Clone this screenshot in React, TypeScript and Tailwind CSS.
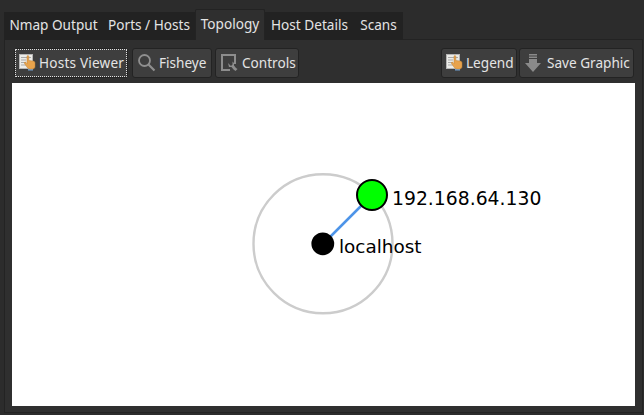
import type { ReactNode } from "react";

function HandIcon() {
  return (
    <svg width="18" height="18" viewBox="0 0 18 18" className="shrink-0">
      <rect x="0.500" y="0.500" width="13" height="14" fill="#ecece8" stroke="#b5b5b5" />
      <path d="M2 3.500h10M2 6h5M2 8.500h5M2 11h5" stroke="#a9a9a9" strokeWidth="1" />
      <path d="M9 14h5v2.500H9z" fill="#6f9fd0" />
      <path d="M8 2.500c0-1.200 1.800-1.200 1.800 0v4l4.400.6c1.300.2 1.800.9 1.800 2.100v3.300c0 1.600-1 2.500-2.500 2.500h-2.800c-1 0-1.700-.4-2.200-1.200L5.500 9.500c-.6-1 .6-1.900 1.400-1.100l1.100 1.100z" fill="#e8a34c" stroke="#bd8238" strokeWidth="0.500" />
    </svg>
  );
}

function SearchIcon() {
  return (
    <svg width="18" height="18" viewBox="0 0 18 18" className="shrink-0" fill="none" stroke="#8f8f8f">
      <circle cx="6.500" cy="6.500" r="5.500" strokeWidth="1.800" />
      <path d="M10.500 10.500l6 6" strokeWidth="2.200" />
    </svg>
  );
}

function WrenchIcon() {
  return (
    <svg width="17" height="18" viewBox="0 0 17 18" className="shrink-0">
      <path d="M14 10V1H1v15h8" fill="none" stroke="#8d8d8d" strokeWidth="2" />
      <path d="M7 9l3 3 1.500-1.500V7.500L13 9v2.500l2 2.500 1.500 1-2 2-2-1.500-2-2.500H8z" fill="#8d8d8d" />
    </svg>
  );
}

function SaveIcon() {
  return (
    <svg width="16" height="18" viewBox="0 0 16 18" className="shrink-0">
      <path d="M4 0h8v1.500H4zM4 2.500h8V4H4zM4 5h8v4h4l-8 9-8-9h4z" fill="#8a8a8a" />
    </svg>
  );
}

function ToolButton({ icon, label, focused, className }: { icon: ReactNode; label: string; focused?: boolean; className: string }) {
  return (
    <div className={`h-[30px] rounded-[3px] border border-[#232323] bg-[#3e3e3e] flex items-center relative whitespace-nowrap ${className}`}>
      {focused && <span className="absolute inset-0 border border-dotted border-[#e0e0e0] rounded-[1px]" />}
      {icon}
      <span className={`text-[13.6px] leading-none text-[#e4e4e4] ${focused ? "tracking-[0.2px]" : ""}`}>{label}</span>
    </div>
  );
}

const TABS = [
  { label: "Nmap Output", w: "w-[99px]" },
  { label: "Ports / Hosts", w: "w-[92px]" },
  { label: "Topology", w: "w-[70px]", active: true },
  { label: "Host Details", w: "w-[89px]" },
  { label: "Scans", w: "w-[49px]" },
];

export default function App() {
  return (
    <div className="w-[644px] h-[415px] bg-[#2c2c2c] flex flex-col overflow-hidden pl-[4px] pt-[9px]" style={{ fontFamily: '"Noto Sans", sans-serif' }}>
      {/* Tabs */}
      <div className="flex items-end h-[31px] relative z-10">
        {TABS.map((t) =>
          t.active ? (
            <div key={t.label} className={`${t.w} h-[31px] bg-[#2f2f2f] border border-b-0 border-[#232323] rounded-t-[2px] flex items-center justify-center text-[13.6px] text-[#e4e4e4] pb-[2px]`}>
              {t.label}
            </div>
          ) : (
            <div key={t.label} className={`${t.w} h-[28px] bg-[#222222] flex items-center justify-center text-[13.6px] text-[#e4e4e4] pb-[1px]`}>
              {t.label}
            </div>
          )
        )}
      </div>

      {/* Panel */}
      <div className="w-[639px] h-[374px] border border-[#232323] bg-[#2f2f2f] pl-[7px] pt-[8px] -mt-px">
        <div className="flex h-[30px] w-[622px]">
          <ToolButton focused icon={<HandIcon />} label="Hosts Viewer" className="w-[114px] pl-[4px] gap-[2px] ml-[2px]" />
          <ToolButton icon={<SearchIcon />} label="Fisheye" className="w-[80px] pl-[5px] gap-[3px] ml-[4px]" />
          <ToolButton icon={<WrenchIcon />} label="Controls" className="w-[84px] pl-[5px] gap-[4px] ml-[3px]" />
          <div className="flex-1" />
          <ToolButton icon={<HandIcon />} label="Legend" className="w-[76px] pl-[4px] gap-[2px]" />
          <ToolButton icon={<SaveIcon />} label="Save Graphic" className="w-[115px] pl-[5px] gap-[6px] ml-[2px]" />
        </div>

        {/* Topology canvas */}
        <div className="w-[623px] h-[323px] bg-white mt-[5px]">
          <svg width="623" height="323" viewBox="12 83 623 323" className="block">
            <circle cx="323" cy="243.700" r="69.500" fill="none" stroke="#cccccc" strokeWidth="2.400" />
            <line x1="323" y1="244" x2="372" y2="195" stroke="#4d94e8" strokeWidth="2.500" />
            <circle cx="322.800" cy="243.800" r="11.400" fill="#000000" />
            <circle cx="372" cy="195" r="15" fill="#00ff00" stroke="#000000" strokeWidth="2" />
            <text x="392" y="205" fontFamily='"DejaVu Sans", sans-serif' fontSize="18.800" fill="#000000">192.168.64.130</text>
            <text x="339" y="253" fontFamily='"DejaVu Sans", sans-serif' fontSize="18.400" fill="#000000">localhost</text>
          </svg>
        </div>
      </div>
    </div>
  );
}
